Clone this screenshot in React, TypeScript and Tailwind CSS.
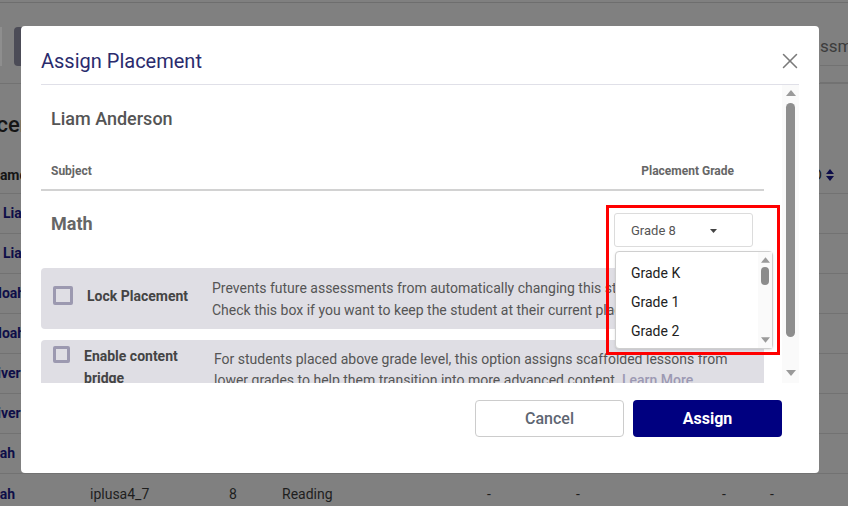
import { X } from "lucide-react"

const font = { fontFamily: "Roboto, 'Noto Sans', sans-serif" }

const bgRows = [
  { name: "Liam", offset: "ml-[3px]" },
  { name: "Liam", offset: "ml-[3px]" },
  { name: "Noah", offset: "ml-[-8px]" },
  { name: "Noah", offset: "ml-[-8px]" },
  { name: "Oliver", offset: "ml-[-16px]" },
  { name: "Oliver", offset: "ml-[-16px]" },
  { name: "Noah", offset: "ml-[-18px]" },
]

const grades = ["Grade K", "Grade 1", "Grade 2"]

function Triangle({ dir, className }: { dir: "up" | "down"; className?: string }) {
  return (
    <svg width="10" height="6" viewBox="0 0 10 6" className={className}>
      {dir === "up" ? <path d="M0 6 L5 0 L10 6 Z" fill="#9a9a9a" /> : <path d="M0 0 L5 6 L10 0 Z" fill="#9a9a9a" />}
    </svg>
  )
}

function BackgroundPage() {
  return (
    <div className="w-[848px] h-[506px] bg-[#808080] overflow-hidden flex flex-col text-[#151515]">
      {/* top strip */}
      <div className="h-[3px] shrink-0 border-b border-[#6e6e6e]" />
      {/* toolbar */}
      <div className="h-[81px] shrink-0 flex border-b border-[#727272]">
        <div className="w-[2px] h-[39px] mt-[24px] bg-[#8e8e8e]" />
        <div className="w-[60px] h-[39px] mt-[24px] ml-[12px] bg-[#4c4c57] rounded-[4px]" />
        <div className="ml-auto w-[28px] flex flex-col overflow-hidden">
          <div className="h-[63px] shrink-0 border-b border-[#727272] flex items-end pb-[9px] text-[17px] leading-[20px] text-[#3c3c3c] whitespace-nowrap">
            ssment
          </div>
          <div className="h-[17px] shrink-0 border-b border-[#727272]" />
        </div>
      </div>
      {/* heading */}
      <div className="h-[70px] shrink-0 flex items-center pt-[10px] ml-[-35px] text-[22px] font-medium whitespace-nowrap">
        Placement
      </div>
      {/* header row */}
      <div className="h-[40px] shrink-0 flex items-center pt-[3px] border-b border-[#727272] text-[14px] font-bold">
        <span className="ml-[-10px]">Name</span>
        <span className="ml-auto mr-[14px] flex items-center gap-[4px] text-[#1a1a1a]">
          <span className="font-normal">D</span>
          <svg width="8" height="12" viewBox="0 0 8 12">
            <path d="M0 5 L4 0 L8 5 Z M0 7 L4 12 L8 7 Z" fill="#0d0d4a" />
          </svg>
        </span>
      </div>
      {bgRows.map((r, i) => (
        <div
          key={i}
          className="h-[40px] shrink-0 flex items-center border-b border-[#727272] text-[14px] font-bold text-[#0e0e48]"
        >
          <span className={r.offset}>{r.name}</span>
        </div>
      ))}
      <div className="h-[40px] shrink-0 flex items-center text-[14px] text-[#1e1e1e] whitespace-nowrap">
        <span className="ml-[-18px] font-bold text-[#0e0e48] w-[108px]">Noah</span>
        <span className="w-[139px]">iplusa4_7</span>
        <span className="w-[53px]">8</span>
        <span className="w-[205px]">Reading</span>
        <span className="w-[89px]">-</span>
        <span className="w-[146px]">-</span>
        <span className="w-[48px]">-</span>
        <span>-</span>
      </div>
    </div>
  )
}

function GradeSelect() {
  return (
    <div className="relative mr-[11px]">
      <div className="w-[139px] h-[34px] border border-[#dcdcdc] rounded-[3px] bg-white flex items-center pt-[2px] pl-[16px] pr-[35px] text-[13px] text-[#555]">
        <span>Grade 8</span>
        <svg width="7" height="4" viewBox="0 0 7 4" className="ml-auto">
          <path d="M0 0 L3.5 4 L7 0 Z" fill="#444" />
        </svg>
      </div>
      {/* open dropdown list */}
      <div className="absolute left-[1px] top-[38px] w-[158px] h-[98px] bg-white border border-[#cfcfcf] rounded-[4px] shadow-sm flex z-10">
        <div className="flex-1 pt-[7px]">
          {grades.map((g) => (
            <div key={g} className="h-[29px] pl-[15px] flex items-center text-[14px] text-[#222]">
              {g}
            </div>
          ))}
        </div>
        <div className="w-[14px] bg-[#fafafa] flex flex-col items-center pt-[5px] pb-[5px]">
          <Triangle dir="up" className="w-[9px] h-[6px]" />
          <div className="w-[8px] h-[18px] mt-[4px] rounded-full bg-[#8c8c8c]" />
          <Triangle dir="down" className="w-[9px] h-[6px] mt-auto" />
        </div>
      </div>
      {/* highlight annotation */}
      <div className="absolute -left-[8px] -top-[8px] w-[174px] h-[150px] border-[3px] border-[#ff0000] pointer-events-none z-20" />
    </div>
  )
}

function Checkbox({ size }: { size: string }) {
  return <div className={`${size} shrink-0 border-[3px] border-[#9c99b0] rounded-[2px]`} />
}

export default function App() {
  return (
    <div className="relative w-[848px] h-[506px] overflow-hidden" style={font}>
      <BackgroundPage />

      {/* modal */}
      <div className="absolute left-[21px] top-[26px] w-[798px] h-[447px] bg-white rounded-[4px] flex flex-col">
        <div className="mx-[20px] h-[59px] shrink-0 border-b border-[#e0e0e8] flex items-center justify-between pt-[11px]">
          <h2 className="text-[20px] text-[#2a2b6d]">Assign Placement</h2>
          <X size={26} strokeWidth={1.4} className="text-[#7a7a7a] mr-[-4px]" />
        </div>

        <div className="mx-[20px] h-[298px] shrink-0 flex overflow-hidden">
          <div className="w-[723px] shrink-0">
            <div className="pl-[10px] pt-[22px] text-[18px] leading-[24px] font-medium text-[#555]">Liam Anderson</div>

            <div className="mt-[32px] pl-[10px] pr-[30px] pb-[10px] border-b-2 border-[#d2d2d2] flex justify-between text-[12px] leading-[16px] font-bold text-[#666]">
              <span>Subject</span>
              <span>Placement Grade</span>
            </div>

            <div className="mt-[22px] flex items-start justify-between">
              <div className="pl-[10px] mt-[-1px] text-[18px] leading-[24px] font-bold text-[#666]">Math</div>
              <GradeSelect />
            </div>

            <div className="mt-[21px] h-[61px] bg-[#dfdee4] rounded-[4px] flex items-center pl-[12px]">
              <Checkbox size="w-[20px] h-[19px] mt-[-6px]" />
              <div className="w-[125px] ml-[14px] mt-[-5px] text-[14px] font-bold text-[#444]">Lock Placement</div>
              <div className="text-[14px] leading-[22px] text-[#555] whitespace-nowrap">
                <div>Prevents future assessments from automatically changing this student's placement.</div>
                <div>Check this box if you want to keep the student at their current placement.</div>
              </div>
            </div>

            <div className="mt-[11px] bg-[#dfdee4] rounded-[4px] flex items-start pl-[12px] pt-[6px] pb-[8px]">
              <Checkbox size="w-[17px] h-[17px]" />
              <div className="w-[130px] ml-[14px] text-[14px] leading-[22px] font-bold text-[#444] mt-[-1px]">
                Enable content bridge
              </div>
              <div className="text-[14px] leading-[21px] text-[#555] whitespace-nowrap mt-[3px]">
                <div>For students placed above grade level, this option assigns scaffolded lessons from</div>
                <div>
                  lower grades to help them transition into more advanced content.{" "}
                  <span className="font-medium text-[#9c99b3]">Learn More</span>
                </div>
              </div>
            </div>
          </div>

          {/* scrollbar */}
          <div className="ml-auto w-[17px] bg-[#fafafa] flex flex-col items-center pt-[5px] pb-[7px]">
            <Triangle dir="up" className="w-[10px] h-[6px]" />
            <div className="w-[9px] h-[234px] mt-[7px] rounded-full bg-[#8e8e8e]" />
            <Triangle dir="down" className="w-[10px] h-[6px] mt-auto" />
          </div>
        </div>

        <div className="flex-1 flex justify-end items-start pt-[17px] pr-[37px] gap-[9px]">
          <button className="w-[149px] h-[37px] border border-[#cccccc] rounded-[4px] bg-white text-[16px] font-medium text-[#5e6672]">
            Cancel
          </button>
          <button className="w-[149px] h-[37px] rounded-[4px] bg-[#000080] text-[16px] font-bold text-white">
            Assign
          </button>
        </div>
      </div>
    </div>
  )
}
